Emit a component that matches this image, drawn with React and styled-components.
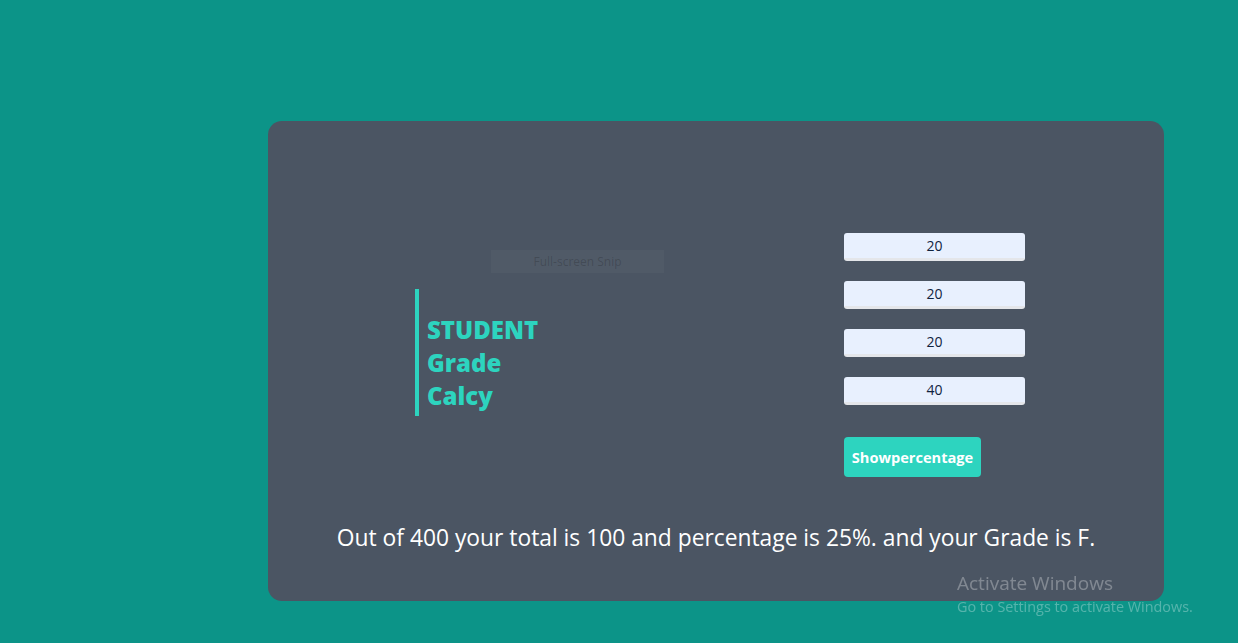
import React, { useState } from "react";
import styled, { createGlobalStyle } from "styled-components";

const GlobalStyle = createGlobalStyle`
  html, body {
    margin: 0;
    padding: 0;
    background: #0c9488;
    font-family: "Open Sans", "Noto Sans", sans-serif;
  }
`;

const Page = styled.div`
  min-height: 643px;
  padding: 121px 0 0 268px;
  box-sizing: border-box;
`;

const Card = styled.div`
  position: relative;
  width: 896px;
  height: 480px;
  background: #4b5563;
  border-radius: 14px;
  padding-top: 112px;
  box-sizing: border-box;
`;

const Row = styled.div`
  display: grid;
  grid-template-columns: 1fr 1fr;
  align-items: center;
`;

const TitleCell = styled.div`
  padding-left: 147px;
`;

const Title = styled.h1`
  margin: 0 0 5px;
  border-left: 4px solid #2dd4bf;
  padding: 24px 0 4px 8px;
  color: #2dd4bf;
  font-size: 24px;
  font-weight: 800;
  line-height: 33px;
`;

const Form = styled.div`
  padding-left: 128px;
  display: flex;
  flex-direction: column;
  gap: 20px;
`;

const Input = styled.input`
  width: 181px;
  height: 28px;
  box-sizing: border-box;
  border: none;
  border-bottom: 3px solid #e4e6ea;
  border-radius: 3px;
  background: #e8f0fe;
  color: #10233e;
  font-family: inherit;
  font-size: 14px;
  text-align: center;
  padding: 0;
  outline: none;
`;

const Button = styled.button`
  align-self: flex-start;
  margin-top: 12px;
  width: 137px;
  height: 40px;
  border: none;
  border-radius: 4px;
  background: #2dd4bf;
  color: #fff;
  font-family: inherit;
  font-weight: 700;
  font-size: 14.6px;
  padding: 0;
`;

const Result = styled.p`
  margin: 46px 0 0;
  text-align: center;
  color: #fff;
  font-size: 22.8px;
  line-height: 30px;
`;

const Snip = styled.div`
  position: absolute;
  left: 223px;
  top: 129px;
  width: 173px;
  height: 23px;
  background: rgba(255, 255, 255, 0.03);
  color: rgba(0, 0, 0, 0.18);
  font-size: 12px;
  line-height: 23px;
  text-align: center;
`;

const Watermark = styled.div`
  position: fixed;
  left: 957px;
  top: 574px;
  color: rgba(255, 255, 255, 0.3);
  line-height: 1;

  .big {
    font-size: 19px;
    margin-bottom: 7px;
  }
  .small {
    font-size: 14.4px;
  }
`;

const App = () => {
  const [marks, setMarks] = useState(["20", "20", "20", "40"]);
  const total = marks.reduce((s, m) => s + Number(m || 0), 0);

  return (
    <>
      <GlobalStyle />
      <Page>
        <Card>
          <Row>
            <TitleCell>
              <Title>
                STUDENT
                <br />
                Grade
                <br />
                Calcy
              </Title>
            </TitleCell>
            <Form>
              {marks.map((m, i) => (
                <Input
                  key={i}
                  value={m}
                  onChange={e => setMarks(marks.map((v, j) => (j === i ? e.target.value : v)))}
                />
              ))}
              <Button>Showpercentage</Button>
            </Form>
          </Row>
          <Result>
            Out of 400 your total is {total} and percentage is 25%. and your Grade is F.
          </Result>
          <Snip>Full-screen Snip</Snip>
        </Card>
      </Page>
      <Watermark>
        <div className="big">Activate Windows</div>
        <div className="small">Go to Settings to activate Windows.</div>
      </Watermark>
    </>
  );
};

export default App;
